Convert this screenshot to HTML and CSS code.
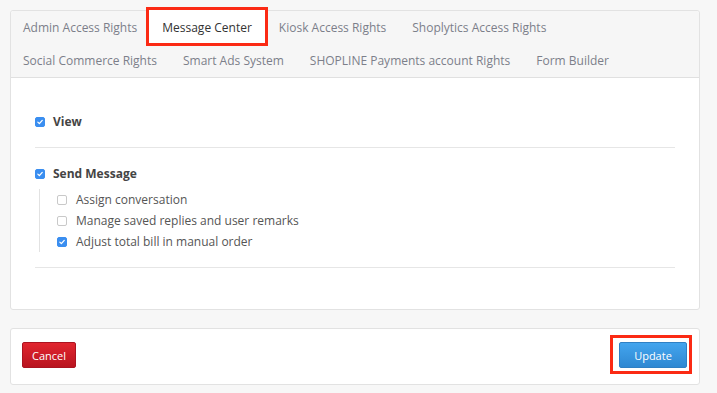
FILE: index.html
```html
<!DOCTYPE html>
<html>
<head>
<meta charset="utf-8">
<link rel="stylesheet" href="styles.css">
</head>
<body>
<div class="page">
  <div class="panel">
    <ul class="tabs">
      <li class="tab">Admin Access Rights</li>
      <li class="tab active">Message Center</li>
      <li class="tab">Kiosk Access Rights</li>
      <li class="tab">Shoplytics Access Rights</li>
      <li class="tab">Social Commerce Rights</li>
      <li class="tab">Smart Ads System</li>
      <li class="tab">SHOPLINE Payments account Rights</li>
      <li class="tab">Form Builder</li>
    </ul>
    <div class="content">
      <div class="section first">
        <label class="row main"><span class="cb checked"><svg viewBox="0 0 10 10"><path d="M2.3 5.2 L4.2 7 L7.8 3" fill="none" stroke="#fff" stroke-width="1.6" stroke-linecap="round" stroke-linejoin="round"/></svg></span>View</label>
      </div>
      <div class="section">
        <label class="row main"><span class="cb checked"><svg viewBox="0 0 10 10"><path d="M2.3 5.2 L4.2 7 L7.8 3" fill="none" stroke="#fff" stroke-width="1.6" stroke-linecap="round" stroke-linejoin="round"/></svg></span>Send Message</label>
        <div class="sub">
          <label class="row"><span class="cb"></span>Assign conversation</label>
          <label class="row"><span class="cb"></span>Manage saved replies and user remarks</label>
          <label class="row"><span class="cb checked"><svg viewBox="0 0 10 10"><path d="M2.3 5.2 L4.2 7 L7.8 3" fill="none" stroke="#fff" stroke-width="1.6" stroke-linecap="round" stroke-linejoin="round"/></svg></span>Adjust total bill in manual order</label>
        </div>
      </div>
    </div>
  </div>
  <div class="panel footer">
    <button class="btn cancel">Cancel</button>
    <button class="btn update">Update</button>
  </div>
</div>
</body>
</html>
```
FILE: styles.css
```css
* { box-sizing: border-box; }
html, body { margin: 0; padding: 0; }
body {
  background: #f7f7f7;
  font-family: "Open Sans", "Noto Sans", sans-serif;
  font-size: 12px;
  color: #555;
}
.page {
  padding: 10px 17px 0 10px;
}
.panel {
  background: #fff;
  border: 1px solid #e2e2e2;
  border-radius: 3px;
}
.tabs {
  list-style: none;
  margin: 0;
  padding: 0;
  display: flex;
  flex-wrap: wrap;
  background: #f6f6f6;
  border-bottom: 1px solid #e0e0e0;
  border-radius: 3px 3px 0 0;
}
.tab {
  padding: 8px 12px 7px;
  margin-right: 2px;
  line-height: 18px;
  color: #7c7f8a;
  white-space: nowrap;
}
.tab.active {
  background: #fff;
  color: #333;
  outline: 3px solid #fb2a14;
  outline-offset: -1px;
  margin-top: -2px;
  padding-top: 10px;
  padding-bottom: 6px;
  padding-left: 14px;
  padding-right: 14px;
  margin-left: -3px;
  margin-right: 1px;
}
.content {
  padding: 0 24px 41px;
}
.section {
  border-bottom: 1px solid #e6e6e6;
  padding: 16px 0 15px;
}
.section.first {
  padding-top: 34px;
}
.row {
  display: flex;
  align-items: center;
  line-height: 21px;
  color: #555;
}
.row.main {
  font-weight: 700;
  color: #444;
  line-height: 20px;
}
.cb {
  width: 10px;
  height: 10px;
  border: 1px solid #c9c9c9;
  border-radius: 2px;
  background: #fff;
  margin-right: 9px;
  display: inline-flex;
}
.row.main .cb { margin-right: 8px; }
.cb.checked {
  background: #3a8ef0;
  border-color: #3a8ef0;
}
.cb svg {
  width: 100%;
  height: 100%;
  display: block;
}
.sub {
  margin: 5px 0 0 4px;
  padding-left: 17px;
  border-left: 1px solid #e2e2e2;
}
.footer {
  margin-top: 18px;
  padding: 13px 12px 16px 11px;
  display: flex;
  justify-content: space-between;
  align-items: center;
}
.btn {
  font-family: "Open Sans", "Noto Sans", sans-serif;
  font-size: 11px;
  color: #fff;
  height: 26px;
  border-radius: 2px;
  cursor: pointer;
  padding: 0;
}
.cancel {
  width: 54px;
  background: linear-gradient(#e1252f, #b9141f);
  border: 1px solid #ab1320;
}
.update {
  width: 68px;
  background: linear-gradient(#43a5ee, #2f88d2);
  border: 1px solid #2f80c4;
  position: relative;
}
.update::after {
  content: "";
  position: absolute;
  left: -10px;
  right: -6px;
  top: -8px;
  bottom: -7px;
  border: 3px solid #fb2a14;
}
```
